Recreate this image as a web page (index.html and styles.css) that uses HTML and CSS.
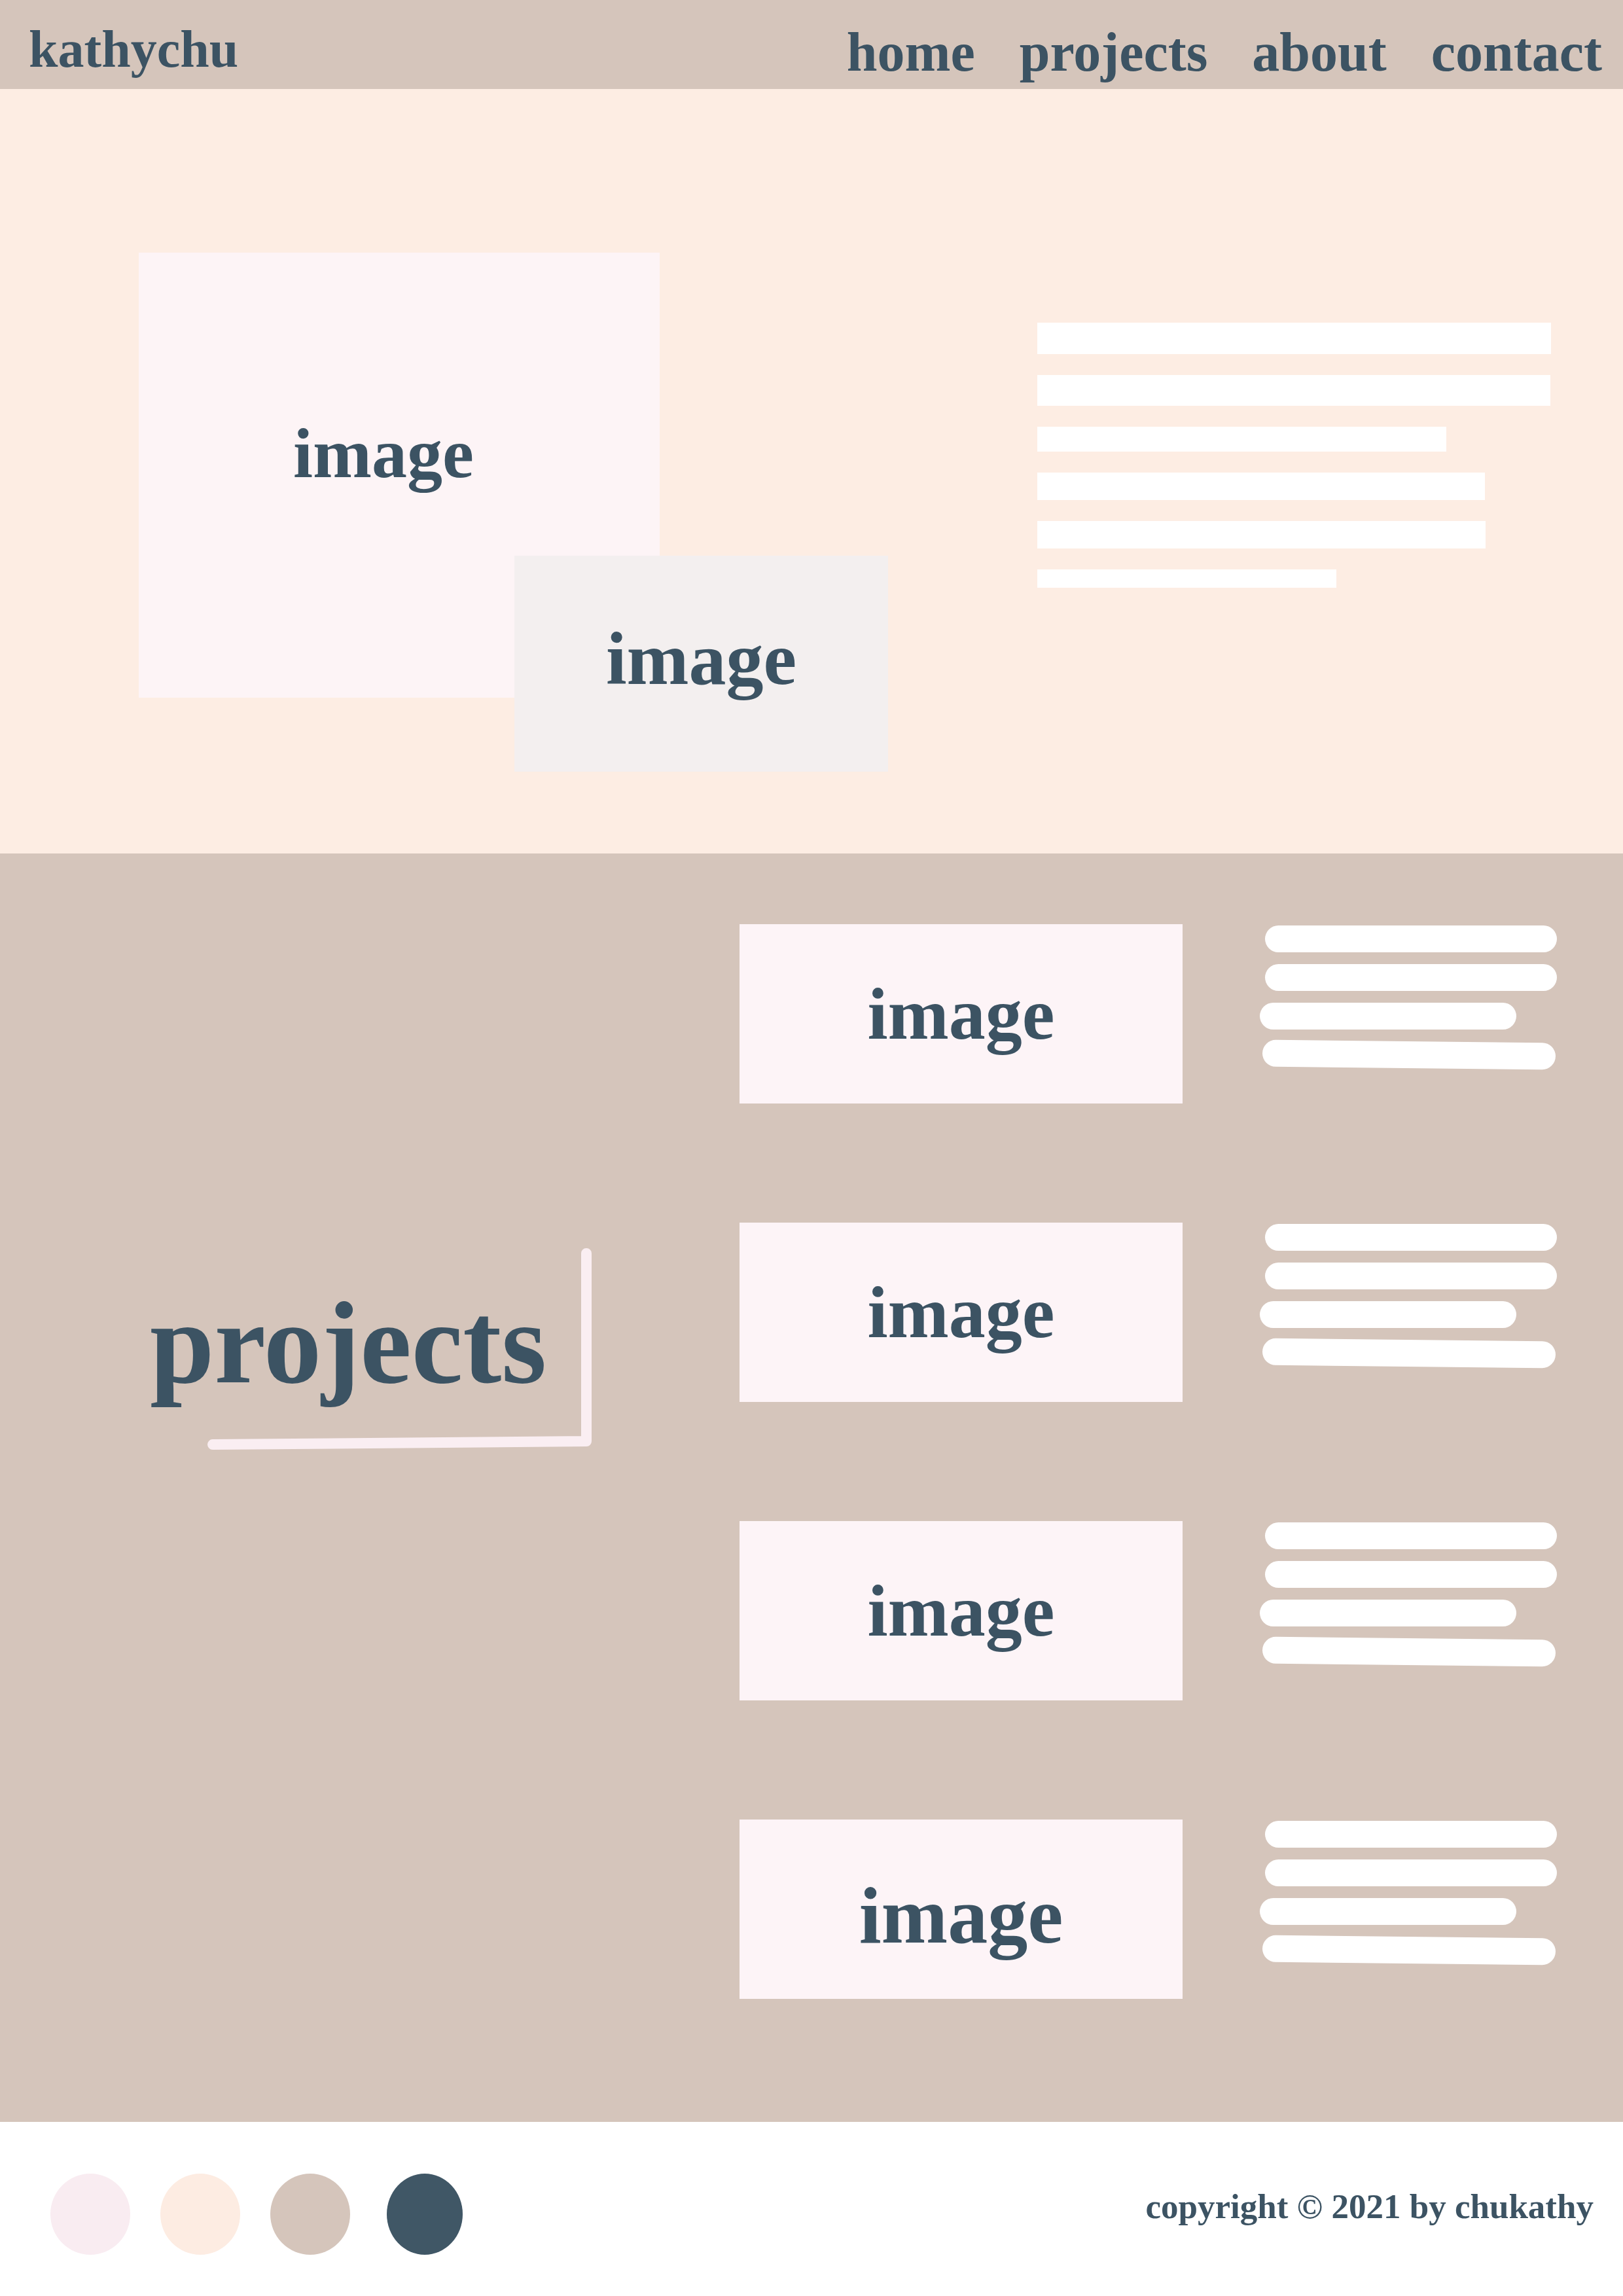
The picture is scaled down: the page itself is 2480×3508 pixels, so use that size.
FILE: index.html
```html
<!DOCTYPE html>
<html lang="en">
<head>
  <meta name="viewport" content="width=device-width, initial-scale=1">
  <link rel="stylesheet" href="styles.css">
  <title>kathychu</title>
</head>
<body>

<!-- Header -->
<header class="topbar">
  <div class="logo">kathychu</div>
  <nav class="nav">
    <a href="#">home</a>
    <a href="#">projects</a>
    <a href="#">about</a>
    <a href="#">contact</a>
  </nav>
</header>

<!-- Hero -->
<section class="hero">
  <div class="collage">
    <div class="photo photo-main"><span>image</span></div>
    <div class="photo photo-small"><span>image</span></div>
  </div>
  <div class="intro">
    <div class="bar" style="width:785px;height:48px"></div>
    <div class="bar" style="width:784px;height:47px"></div>
    <div class="bar" style="width:625px;height:38px"></div>
    <div class="bar" style="width:684px;height:42px"></div>
    <div class="bar" style="width:685px;height:42px"></div>
    <div class="bar" style="width:457px;height:28px"></div>
  </div>
</section>

<!-- Projects -->
<section class="projects">
  <div class="projects-title">
    <h2>projects
      <svg class="corner" width="610" height="330" viewBox="0 0 610 330">
        <polyline points="596,20 596,307 25,312" fill="none" stroke="#faeef2" stroke-width="16" stroke-linecap="round" stroke-linejoin="round"/>
      </svg>
    </h2>
  </div>

  <div class="project-list">
    <div class="project">
      <div class="thumb"><span>image</span></div>
      <div class="lines">
        <div class="pill"></div>
        <div class="pill"></div>
        <div class="pill short"></div>
        <div class="pill tilt"></div>
      </div>
    </div>
    <div class="project">
      <div class="thumb"><span>image</span></div>
      <div class="lines">
        <div class="pill"></div>
        <div class="pill"></div>
        <div class="pill short"></div>
        <div class="pill tilt"></div>
      </div>
    </div>
    <div class="project">
      <div class="thumb"><span>image</span></div>
      <div class="lines">
        <div class="pill"></div>
        <div class="pill"></div>
        <div class="pill short"></div>
        <div class="pill tilt"></div>
      </div>
    </div>
    <div class="project">
      <div class="thumb big"><span>image</span></div>
      <div class="lines">
        <div class="pill"></div>
        <div class="pill"></div>
        <div class="pill short"></div>
        <div class="pill tilt"></div>
      </div>
    </div>
  </div>
</section>

<!-- Footer -->
<footer class="footer">
  <div class="palette">
    <span class="dot dot-pink"></span>
    <span class="dot dot-peach"></span>
    <span class="dot dot-sand"></span>
    <span class="dot dot-slate"></span>
  </div>
  <p class="copyright">copyright © 2021 by chukathy</p>
</footer>

</body>
</html>
```

FILE: styles.css
```css
body {
  font-family: "Liberation Serif", "Times New Roman", serif;
  font-weight: bold;
  color: #3c5363;
  margin: 0;
  padding: 0;
  width: 2480px;
}
.topbar {
  display: flex;
  justify-content: space-between;
  align-items: flex-start;
  height: 136px;
  box-sizing: border-box;
  padding: 35px 32px 0 44px;
  background-color: #d5c5bb;
}
.logo {
  font-size: 80px;
  line-height: 1;
}
.nav {
  display: flex;
  gap: 68px;
  margin-top: 3px;
}
.nav a {
  font-size: 84px;
  line-height: 1;
  color: #3c5363;
  text-decoration: none;
}
.hero {
  display: flex;
  align-items: flex-start;
  height: 1168px;
  box-sizing: border-box;
  padding: 250px 0 0 212px;
  background-color: #fdede3;
}
.collage {
  position: relative;
  width: 1145px;
  height: 793px;
  flex-shrink: 0;
}
.photo {
  display: flex;
  justify-content: center;
  align-items: center;
  box-sizing: border-box;
}
.photo-main {
  width: 796px;
  height: 680px;
  padding: 0 48px 66px 0;
  background-color: #fdf4f6;
  font-size: 108px;
}
.photo-small {
  position: absolute;
  left: 574px;
  top: 463px;
  width: 571px;
  height: 330px;
  padding-bottom: 14px;
  background-color: #f3efef;
  font-size: 114px;
}
.intro {
  display: flex;
  flex-direction: column;
  gap: 32px;
  margin: 107px 0 0 228px;
}
.bar {
  background-color: #fff;
}
.projects {
  display: flex;
  height: 1938px;
  background-color: #d5c5bb;
}
.projects-title {
  width: 1130px;
  flex-shrink: 0;
  box-sizing: border-box;
  padding: 660px 0 0 229px;
}
.projects-title h2 {
  position: relative;
  display: inline-block;
  margin: 0;
  font-size: 177px;
  line-height: 1;
}
.corner {
  position: absolute;
  left: 71px;
  top: -69px;
}
.project-list {
  display: flex;
  flex-direction: column;
  gap: 182px;
  padding-top: 108px;
}
.project {
  display: flex;
  align-items: flex-start;
}
.thumb {
  display: flex;
  justify-content: center;
  align-items: center;
  width: 677px;
  height: 274px;
  background-color: #fdf4f7;
  font-size: 112px;
}
.thumb.big {
  font-size: 122px;
  padding-top: 20px;
  box-sizing: border-box;
}
.lines {
  display: flex;
  flex-direction: column;
  gap: 18px;
  margin: 2px 0 0 126px;
}
.pill {
  width: 446px;
  height: 41px;
  border-radius: 21px;
  background-color: #fff;
}
.pill.short {
  width: 392px;
  margin-left: -8px;
}
.pill.tilt {
  width: 448px;
  margin-left: -4px;
  transform: rotate(0.6deg);
}
.footer {
  display: flex;
  justify-content: space-between;
  align-items: center;
  height: 266px;
  box-sizing: border-box;
  padding: 16px 45px 0 77px;
  background-color: #fff;
}
.palette {
  display: flex;
  gap: 46px;
}
.dot {
  display: block;
  width: 122px;
  height: 124px;
  border-radius: 50%;
}
.dot-pink {
  background-color: #f9ecf1;
}
.dot-peach {
  background-color: #fdece2;
}
.dot-sand {
  background-color: #d5c5bb;
}
.dot-slate {
  width: 116px;
  margin-left: 10px;
  background-color: #405766;
}
.copyright {
  margin: 0 0 24px;
  font-size: 53px;
  line-height: 1;
}
```
